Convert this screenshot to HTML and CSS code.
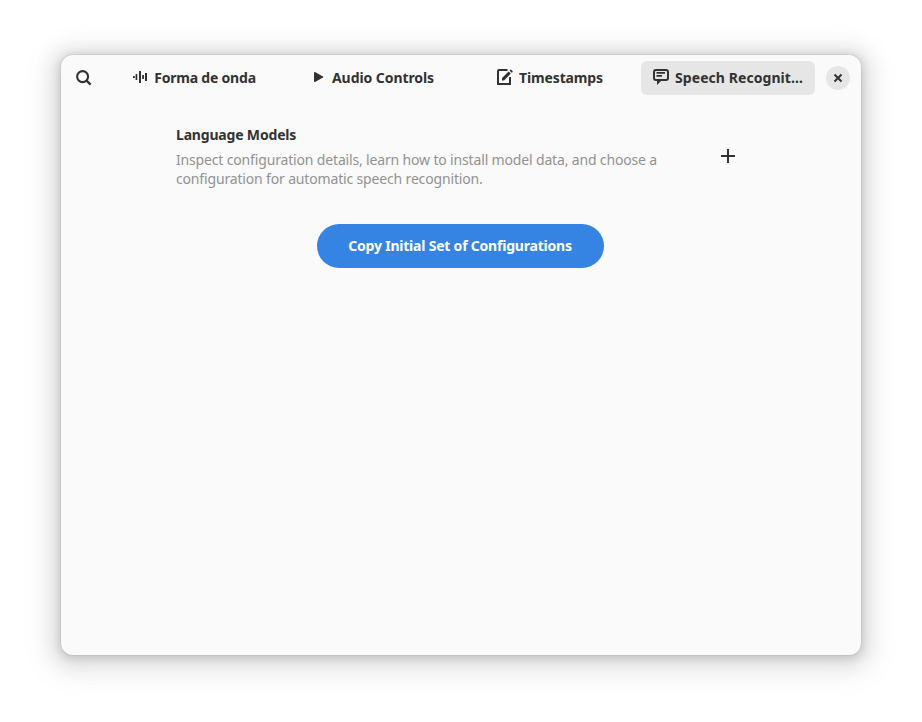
FILE: index.html
```
<!DOCTYPE html>
<html lang="en">
<head>
<meta charset="utf-8">
<title>Preferences</title>
<link rel="stylesheet" href="styles.css">
</head>
<body>
<main class="window">
  <header class="bar">
    <button class="search" aria-label="Search"><svg width="16" height="16" viewBox="0 0 16 16"><circle cx="6.6" cy="6.6" r="5.5" fill="none" stroke="currentColor" stroke-width="2.1"/><path d="M10.5 10.5 14.6 14.6" stroke="currentColor" stroke-width="2.4"/></svg></button>
    <nav class="tabs">
      <button class="tab"><svg width="16" height="16" viewBox="0 0 16 16"><path fill="currentColor" d="M1 7h1.8v2H1zM3.6 5h1.7v6H3.6zM7 2h2v12H7zM10.2 6H12v4h-1.8zM13 4h2v8h-2z"/></svg><span class="wave">Forma de onda</span></button>
      <button class="tab"><svg width="16" height="16" viewBox="0 0 16 16"><path fill="currentColor" d="M4 3.7Q4 2.7 5 3L13 7.4Q13.8 8 13 8.6L5 13Q4 13.3 4 12.3z"/></svg><span class="audio">Audio Controls</span></button>
      <button class="tab"><svg width="16" height="16" viewBox="0 0 16 16"><path d="M10.5 1H2Q1 1 1 2v13h12V8" fill="none" stroke="currentColor" stroke-width="2"/><path d="M5 11.4V9l6.6-6.6 2.2 2.2L7 11.4zM12.5 1.6l1-.9q.5-.3 1 .2l1 1q.4.5 0 1l-.9.9z" fill="currentColor"/></svg><span class="time">Timestamps</span></button>
      <button class="tab active"><svg width="16" height="16" viewBox="0 0 16 16"><path d="M3 1h10q2 0 2 2v6q0 2-2 2H3q-2 0-2-2V3q0-2 2-2z" fill="none" stroke="currentColor" stroke-width="2"/><path d="M4 11v5l5-5zM3.5 3H12v1.7H3.5zM3.5 6H9v1.7H3.5z" fill="currentColor"/></svg><span class="speech">Speech Recognit…</span></button>
    </nav>
    <button class="close" aria-label="Close"><svg width="16" height="16" viewBox="0 0 16 16"><path d="M4.5 4.5 11.5 11.5M11.5 4.5 4.5 11.5" stroke="currentColor" stroke-width="2"/></svg></button>
  </header>
  <section class="page">
    <div class="group">
      <div>
        <h1>Language Models</h1>
        <p>Inspect configuration details, learn how to install model data, and choose a<br>configuration for automatic speech recognition.</p>
      </div>
      <button class="add" aria-label="Add"><svg width="16" height="16" viewBox="0 0 16 16"><path d="M7 1h2v6h6v2H9v6H7V9H1V7h6z" fill="currentColor"/></svg></button>
    </div>
    <button class="copy"><span>Copy Initial Set of Configurations</span></button>
  </section>
</main>
</body>
</html>
```
FILE: styles.css
```
* { box-sizing: border-box; }
body {
  margin: 0;
  padding: 55px 61px 67px;
  background: #fff;
  color: #323232;
  font: 14px/19px "Noto Sans", sans-serif;
}
button {
  display: flex;
  align-items: center;
  justify-content: center;
  padding: 0;
  border: 0;
  background: none;
  color: inherit;
  font: inherit;
  font-weight: 700;
  white-space: nowrap;
}
svg { display: block; flex: none; }
.window {
  height: 600px;
  border-radius: 12px;
  background: #fafafa;
  box-shadow: 0 0 0 1px rgba(0,0,0,.05), 0 2px 8px 2px rgba(0,0,0,.13), 0 3px 20px 10px rgba(0,0,0,.09), 0 6px 32px 16px rgba(0,0,0,.04);
}
.bar { display: flex; align-items: center; height: 46px; padding: 0 11px 0 6px; }
.search { width: 34px; height: 34px; }
.tabs { display: flex; gap: 4px; margin-left: 6px; }
.tab { width: 174px; height: 34px; gap: 6px; padding-bottom: 2px; border-radius: 6px; }
.wave { width: 102px; letter-spacing: -.2px; }
.audio { width: 102px; letter-spacing: -.07px; }
.time { width: 84px; letter-spacing: -.15px; }
.speech { width: 128px; letter-spacing: .07px; }
.active { background: #e6e6e6; }
.close { width: 24px; height: 24px; margin-left: auto; border-radius: 50%; background: #e6e6e6; }
.page { width: 570px; margin: 0 auto 0 114px; padding-top: 23px; }
.group { display: flex; align-items: center; justify-content: space-between; height: 64px; padding-left: 1px; }
h1 { margin: 0 0 6px; font-size: 14px; line-height: 19px; letter-spacing: -.18px; }
p { margin: 0; color: #929292; letter-spacing: -.16px; white-space: nowrap; }
.add { width: 34px; height: 34px; }
.copy { width: 287px; height: 44px; margin: 36px auto 0; padding-bottom: 2px; border-radius: 22px; background: #3584e4; color: #fff; letter-spacing: -.21px; }
```
